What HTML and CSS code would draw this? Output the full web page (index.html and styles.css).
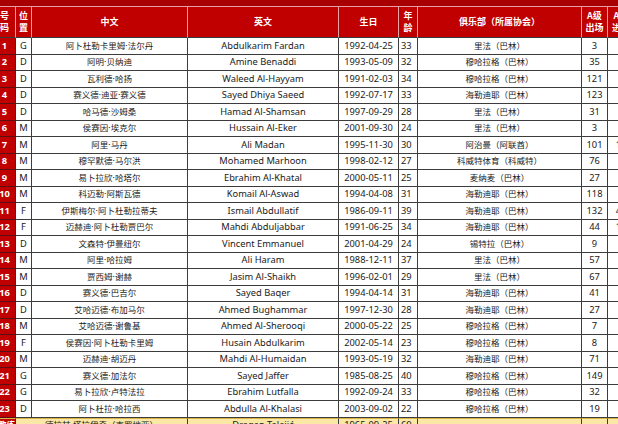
FILE: index.html
```html
<!DOCTYPE html>
<html lang="zh-CN">
<head>
<meta charset="utf-8">
<title>巴林队名单</title>
<link rel="stylesheet" href="styles.css">
</head>
<body>
<div class="sheet">
  <div class="topbar"></div>
  <div class="roster">
    <div class="h"><span>号<br>码</span></div><div class="h"><span>位<br>置</span></div><div class="h"><span>中文</span></div><div class="h"><span>英文</span></div><div class="h"><span>生日</span></div><div class="h"><span>年<br>龄</span></div><div class="h"><span>俱乐部（所属协会）</span></div><div class="h"><span>A级<br>出场</span></div><div class="h last"><span>A级<br>进球</span></div>

    <div class="c no">1</div><div class="c">G</div><div class="c cn">阿卜杜勒卡里姆·法尔丹</div><div class="c">Abdulkarim Fardan</div><div class="c">1992-04-25</div><div class="c age">33</div><div class="c cn">里法（巴林）</div><div class="c">3</div><div class="c last">0</div>
    <div class="c no">2</div><div class="c">D</div><div class="c cn">阿明·贝纳迪</div><div class="c">Amine Benaddi</div><div class="c">1993-05-09</div><div class="c age">32</div><div class="c cn">穆哈拉格（巴林）</div><div class="c">35</div><div class="c last">1</div>
    <div class="c no">3</div><div class="c">D</div><div class="c cn">瓦利德·哈扬</div><div class="c">Waleed Al-Hayyam</div><div class="c">1991-02-03</div><div class="c age">34</div><div class="c cn">穆哈拉格（巴林）</div><div class="c">121</div><div class="c last">2</div>
    <div class="c no">4</div><div class="c">D</div><div class="c cn">赛义德·迪亚·赛义德</div><div class="c">Sayed Dhiya Saeed</div><div class="c">1992-07-17</div><div class="c age">33</div><div class="c cn">海勒迪耶（巴林）</div><div class="c">123</div><div class="c last">4</div>
    <div class="c no">5</div><div class="c">D</div><div class="c cn">哈马德·沙姆桑</div><div class="c">Hamad Al-Shamsan</div><div class="c">1997-09-29</div><div class="c age">28</div><div class="c cn">里法（巴林）</div><div class="c">31</div><div class="c last">1</div>
    <div class="c no">6</div><div class="c">M</div><div class="c cn">侯赛因·埃克尔</div><div class="c">Hussain Al-Eker</div><div class="c">2001-09-30</div><div class="c age">24</div><div class="c cn">里法（巴林）</div><div class="c">3</div><div class="c last">0</div>
    <div class="c no">7</div><div class="c">M</div><div class="c cn">阿里·马丹</div><div class="c">Ali Madan</div><div class="c">1995-11-30</div><div class="c age">30</div><div class="c cn">阿治曼（阿联酋）</div><div class="c">101</div><div class="c last">16</div>
    <div class="c no">8</div><div class="c">M</div><div class="c cn">穆罕默德·马尔洪</div><div class="c">Mohamed Marhoon</div><div class="c">1998-02-12</div><div class="c age">27</div><div class="c cn">科威特体育（科威特）</div><div class="c">76</div><div class="c last">6</div>
    <div class="c no">9</div><div class="c">M</div><div class="c cn">易卜拉欣·哈塔尔</div><div class="c">Ebrahim Al-Khatal</div><div class="c">2000-05-11</div><div class="c age">25</div><div class="c cn">麦纳麦（巴林）</div><div class="c">27</div><div class="c last">1</div>
    <div class="c no">10</div><div class="c">M</div><div class="c cn">科迈勒·阿斯瓦德</div><div class="c">Komail Al-Aswad</div><div class="c">1994-04-08</div><div class="c age">31</div><div class="c cn">海勒迪耶（巴林）</div><div class="c">118</div><div class="c last">9</div>
    <div class="c no">11</div><div class="c">F</div><div class="c cn">伊斯梅尔·阿卜杜勒拉蒂夫</div><div class="c">Ismail Abdullatif</div><div class="c">1986-09-11</div><div class="c age">39</div><div class="c cn">海勒迪耶（巴林）</div><div class="c">132</div><div class="c last">45</div>
    <div class="c no">12</div><div class="c">F</div><div class="c cn">迈赫迪·阿卜杜勒贾巴尔</div><div class="c">Mahdi Abduljabbar</div><div class="c">1991-06-25</div><div class="c age">34</div><div class="c cn">海勒迪耶（巴林）</div><div class="c">44</div><div class="c last">12</div>
    <div class="c no">13</div><div class="c">D</div><div class="c cn">文森特·伊曼纽尔</div><div class="c">Vincent Emmanuel</div><div class="c">2001-04-29</div><div class="c age">24</div><div class="c cn">锡特拉（巴林）</div><div class="c">9</div><div class="c last">0</div>
    <div class="c no">14</div><div class="c">M</div><div class="c cn">阿里·哈拉姆</div><div class="c">Ali Haram</div><div class="c">1988-12-11</div><div class="c age">37</div><div class="c cn">里法（巴林）</div><div class="c">57</div><div class="c last">2</div>
    <div class="c no">15</div><div class="c">M</div><div class="c cn">贾西姆·谢赫</div><div class="c">Jasim Al-Shaikh</div><div class="c">1996-02-01</div><div class="c age">29</div><div class="c cn">里法（巴林）</div><div class="c">67</div><div class="c last">3</div>
    <div class="c no">16</div><div class="c">D</div><div class="c cn">赛义德·巴吉尔</div><div class="c">Sayed Baqer</div><div class="c">1994-04-14</div><div class="c age">31</div><div class="c cn">海勒迪耶（巴林）</div><div class="c">41</div><div class="c last">0</div>
    <div class="c no">17</div><div class="c">D</div><div class="c cn">艾哈迈德·布加马尔</div><div class="c">Ahmed Bughammar</div><div class="c">1997-12-30</div><div class="c age">28</div><div class="c cn">海勒迪耶（巴林）</div><div class="c">27</div><div class="c last">1</div>
    <div class="c no">18</div><div class="c">M</div><div class="c cn">艾哈迈德·谢鲁基</div><div class="c">Ahmed Al-Sherooqi</div><div class="c">2000-05-22</div><div class="c age">25</div><div class="c cn">穆哈拉格（巴林）</div><div class="c">7</div><div class="c last">0</div>
    <div class="c no">19</div><div class="c">F</div><div class="c cn">侯赛因·阿卜杜勒卡里姆</div><div class="c">Husain Abdulkarim</div><div class="c">2002-05-14</div><div class="c age">23</div><div class="c cn">穆哈拉格（巴林）</div><div class="c">8</div><div class="c last">1</div>
    <div class="c no">20</div><div class="c">M</div><div class="c cn">迈赫迪·胡迈丹</div><div class="c">Mahdi Al-Humaidan</div><div class="c">1993-05-19</div><div class="c age">32</div><div class="c cn">海勒迪耶（巴林）</div><div class="c">71</div><div class="c last">5</div>
    <div class="c no">21</div><div class="c">G</div><div class="c cn">赛义德·加法尔</div><div class="c">Sayed Jaffer</div><div class="c">1985-08-25</div><div class="c age">40</div><div class="c cn">穆哈拉格（巴林）</div><div class="c">149</div><div class="c last">0</div>
    <div class="c no">22</div><div class="c">G</div><div class="c cn">易卜拉欣·卢特法拉</div><div class="c">Ebrahim Lutfalla</div><div class="c">1992-09-24</div><div class="c age">33</div><div class="c cn">穆哈拉格（巴林）</div><div class="c">32</div><div class="c last">0</div>
    <div class="c no">23</div><div class="c">D</div><div class="c cn">阿卜杜拉·哈拉西</div><div class="c">Abdulla Al-Khalasi</div><div class="c">2003-09-02</div><div class="c age">22</div><div class="c cn">穆哈拉格（巴林）</div><div class="c">19</div><div class="c last">0</div>

    <div class="c no coach-label">主教练</div><div class="c cn coach span2">德拉甘·塔拉伊奇（克罗地亚）</div><div class="c coach">Dragan Talajić</div><div class="c coach">1965-09-25</div><div class="c coach age">60</div><div class="c coach"></div><div class="c coach"></div><div class="c coach last"></div>
  </div>
</div>
</body>
</html>
```

FILE: styles.css
```css
html {
  background: #ffffff;
  overflow: hidden;
}

body {
  margin: 0;
  padding: 0;
  font-family: "Noto Sans", "Noto Sans CJK SC", sans-serif;
  color: #1a1a1a;
}

.sheet {
  margin-left: -6px;
  width: 640px;
}

.topbar {
  height: 6px;
  background: #a80000;
  border-bottom: 1px solid #e8a0a0;
}

.roster {
  display: grid;
  grid-template-columns: 22px 16px 156px 151px 60px 19px 164px 26px 21px 5px;
  grid-template-rows: 31px repeat(24, 16.5px);
  width: 640px;
}

.roster > div {
  box-sizing: border-box;
  display: flex;
  align-items: center;
  justify-content: center;
  white-space: nowrap;
  border-right: 1px solid #3c3c3c;
  border-bottom: 1px solid #3c3c3c;
}

.roster > .last {
  grid-column-end: span 2;
  border-right: 0;
}

.roster > .h {
  background: #c00000;
  color: #ffffff;
  font-weight: bold;
  font-size: 9px;
  line-height: 12px;
  text-align: center;
  font-family: "Noto Sans CJK SC", sans-serif;
  border-right-color: #e6a3a3;
  border-bottom-color: #3a3a3a;
}

.roster .h span {
  display: block;
  text-align: center;
}

.roster > .c {
  font-size: 9.3px;
  line-height: 12px;
  background: #ffffff;
  overflow: hidden;
}

.roster > .cn {
  font-size: 8.5px;
}

.roster > .age {
  justify-content: flex-start;
  padding-left: 2px;
}

.roster > .no {
  background: #c00000;
  color: #ffffff;
  font-weight: bold;
  border-right-color: #6a1414;
  border-bottom-color: #5a1010;
}

.roster > .coach {
  background: #fbe7a6;
  border-top: 1px solid #d9b54a;
  align-items: flex-start;
}

.roster > .coach-label {
  background: #c00000;
  font-size: 8.5px;
  justify-content: flex-end;
  align-items: flex-start;
  border-top: 1px solid #d9b54a;
}

.roster > .span2 {
  grid-column: span 2;
}
```
